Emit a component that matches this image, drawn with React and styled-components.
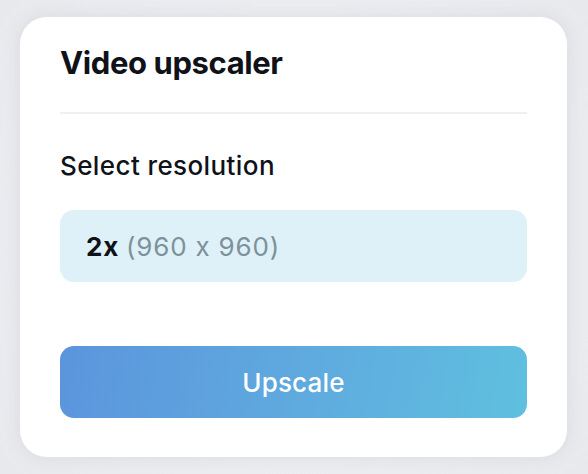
import React from "react";
import styled, { createGlobalStyle } from "styled-components";

const Global = createGlobalStyle`
  html, body { margin: 0; padding: 0; }
  body {
    background: #eaebef;
    font-family: Inter, "Noto Sans", sans-serif;
    font-feature-settings: "calt" 0;
    -webkit-font-smoothing: antialiased;
  }
`;

const Page = styled.div`
  width: 588px;
  height: 474px;
  box-sizing: border-box;
  padding: 16px 20px 16px 19px;
  background: radial-gradient(circle at 50% 50%, #f1f2f5 0%, #e8e9ed 100%);
`;

const Card = styled.div`
  height: 100%;
  box-sizing: border-box;
  background: #fff;
  border-radius: 28px;
  border: 1px solid #e3e4e8;
  box-shadow: 0 0 14px rgba(180, 184, 196, 0.3);
  padding: 30px 40px 39px 40px;
  display: flex;
  flex-direction: column;
`;

const Title = styled.h1`
  margin: 0;
  font-size: 31px;
  line-height: 32px;
  font-weight: 700;
  color: #10121a;
  letter-spacing: -0.4px;
`;

const Divider = styled.hr`
  border: none;
  height: 2px;
  background: #eff0f2;
  margin: 33px 0 38px;
`;

const Label = styled.div`
  font-size: 26px;
  line-height: 28px;
  font-weight: 500;
  color: #10121a;
  letter-spacing: 0.4px;
`;

const Select = styled.div`
  margin-top: 30px;
  height: 72px;
  border-radius: 14px;
  background: #dff1f8;
  display: flex;
  align-items: center;
  padding: 0 26px;
  font-size: 26px;
  letter-spacing: 0.8px;
`;

const Strong = styled.span`
  font-weight: 700;
  color: #10121a;
  margin-right: 7px;
`;

const Muted = styled.span`
  color: #7d919b;
  font-weight: 400;
`;

const Button = styled.button`
  margin-top: 64px;
  height: 72px;
  border: none;
  border-radius: 14px;
  background: linear-gradient(100deg, #5b95dc 0%, #5fa9df 50%, #5fc0df 100%);
  color: #fff;
  font-family: inherit;
  font-feature-settings: "calt" 0;
  font-size: 26px;
  font-weight: 500;
  letter-spacing: 0.2px;
  cursor: pointer;
`;

export default function App() {
  return (
    <>
      <Global />
      <Page>
        <Card>
          <Title>Video upscaler</Title>
          <Divider />
          <Label>Select resolution</Label>
          <Select>
            <Strong>2x</Strong>
            <Muted>(960 x 960)</Muted>
          </Select>
          <Button>Upscale</Button>
        </Card>
      </Page>
    </>
  );
}
